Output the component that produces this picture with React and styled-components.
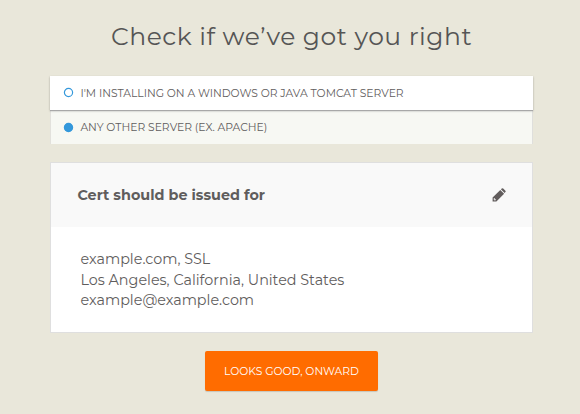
import styled, { createGlobalStyle } from "styled-components"

const GlobalStyle = createGlobalStyle`
    * {
        box-sizing: border-box;
    }

    body {
        margin: 0;
        background-color: #e9e7da;
        color: #5f5d5d;
        font-family: Montserrat, Inter, "Open Sans", sans-serif;
    }
`

const Container = styled.div`
    width: 580px;
    height: 414px;
    padding: 19px 47px 0 50px;
    overflow: hidden;
    display: flex;
    flex-direction: column;
`

const Title = styled.h1`
    margin: 0 0 23px 61px;
    font-size: 25px;
    font-weight: 400;
    line-height: 34px;
    letter-spacing: 0.52px;
    color: #555;
    white-space: nowrap;
`

const Options = styled.div`
    display: flex;
    flex-direction: column;
    margin-bottom: 18px;
`

const Option = styled.div`
    display: flex;
    align-items: center;
    height: ${({ $raised }) => ($raised ? "34px" : "33px")};
    margin: ${({ $raised }) => ($raised ? "0" : "1px 1px 0")};
    padding-left: ${({ $raised }) => ($raised ? "14px" : "13px")};
    background-color: ${({ $raised }) => ($raised ? "#fff" : "#f7f8f3")};
    box-shadow: ${({ $raised }) =>
        $raised ? "0 1px 0 #a8a8a8, 0 1px 2px rgba(0, 0, 0, 0.3)" : "1px 0 0 #dfdfdc, -1px 0 0 #e2e1dc"};
    position: relative;
    z-index: ${({ $raised }) => ($raised ? 1 : 0)};
`

const Radio = styled.svg`
    width: 9px;
    height: 9px;
    margin: -1px 7.4px 0 0;
    overflow: visible;
    fill: ${({ $checked }) => ($checked ? "#3498db" : "none")};
    stroke: #3498db;
    stroke-width: 1.2px;
`

const OptionLabel = styled.span`
    font-size: 10.77px;
    text-transform: uppercase;
    white-space: nowrap;
`

const Card = styled.div`
    height: 171px;
    border: 1px solid #dfdfdf;
    background-color: #fff;
`

const CardHeader = styled.div`
    display: flex;
    align-items: center;
    justify-content: space-between;
    height: 64px;
    padding: 0 26px 0 26.5px;
    background-color: #f9f9f9;
`

const CardTitle = styled.h2`
    margin: 0;
    font-size: 14.35px;
    font-weight: 700;
`

const Details = styled.div`
    padding: 22px 0 0 29.5px;
`

const Line = styled.p`
    margin: 0;
    font-size: 14.35px;
    line-height: 20.6px;
    white-space: nowrap;
`

const Button = styled.button`
    align-self: flex-start;
    flex-shrink: 0;
    width: 173px;
    height: 40px;
    margin: 18px 0 0 155px;
    padding: 0;
    border: none;
    border-radius: 2px;
    background-color: #ff6c00;
    box-shadow: 0 1px 1px rgba(0, 0, 0, 0.15);
    color: #fff;
    font-family: inherit;
    font-size: 10.77px;
    text-transform: uppercase;
    white-space: nowrap;
`

const RadioIcon = ({ checked }) => (
    <Radio $checked={checked} viewBox="0 0 9 9">
        <circle cx="4.5" cy="4.5" r="4.1" />
    </Radio>
)

const PencilIcon = () => (
    <svg width="14" height="14" viewBox="0 0 14 14">
        <path
            fill="#625d5d"
            fillRule="evenodd"
            d="M8.3 1.9 12.1 5.7 4.4 13.4H.6V9.6ZM8.9 1.3 9.8.5Q10.5-.1 11.2.5L13.4 2.7Q14 3.4 13.4 4.1L12.6 5ZM2.3 10.1 1.6 10.8V11.6H2.4V12.4H3.2L3.9 11.7Z"
        />
    </svg>
)

const App = () => {
    return (
        <>
            <GlobalStyle />
            <Container>
                <Title>Check if we’ve got you right</Title>
                <Options>
                    <Option $raised>
                        <RadioIcon />
                        <OptionLabel>I'm installing on a Windows or Java Tomcat server</OptionLabel>
                    </Option>
                    <Option>
                        <RadioIcon checked />
                        <OptionLabel>Any other server (ex. Apache)</OptionLabel>
                    </Option>
                </Options>
                <Card>
                    <CardHeader>
                        <CardTitle>Cert should be issued for</CardTitle>
                        <PencilIcon />
                    </CardHeader>
                    <Details>
                        <Line>example.com, SSL</Line>
                        <Line>Los Angeles, California, United States</Line>
                        <Line>example@example.com</Line>
                    </Details>
                </Card>
                <Button>Looks good, onward</Button>
            </Container>
        </>
    )
}

export default App
